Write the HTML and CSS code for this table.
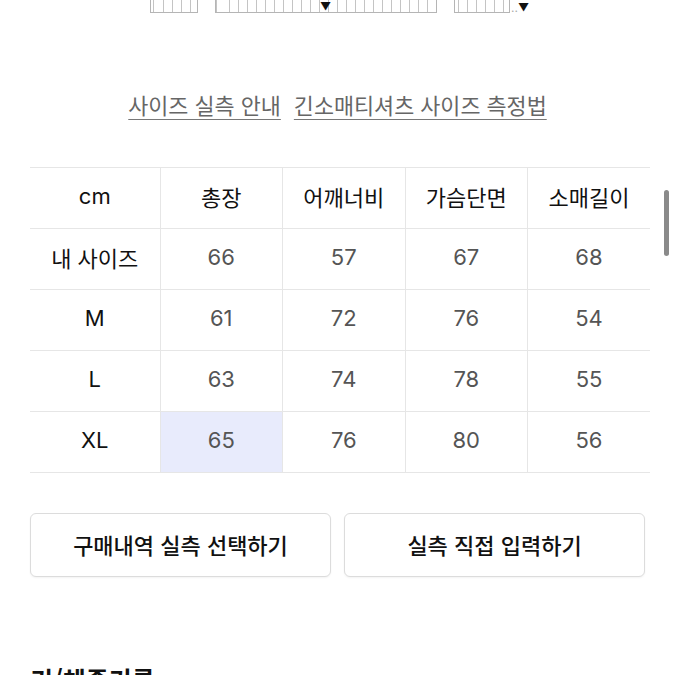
FILE: index.html
```html
<!DOCTYPE html>
<html lang="ko">
<head>
<meta charset="utf-8">
<link rel="stylesheet" href="styles.css">
</head>
<body>
<div class="page">
  <div class="topstrip">
    <div class="tofu t1"></div>
    <div class="tofu t2"><span class="arrow a2">▼</span></div>
    <div class="tofu t3"></div>
    <span class="dots">..</span><span class="arrow a3">▼</span>
  </div>

  <div class="links">
    <a class="link">사이즈 실측 안내</a>
    <a class="link">긴소매티셔츠 사이즈 측정법</a>
  </div>

  <table class="size">
    <tr class="head">
      <th>cm</th><th>총장</th><th>어깨너비</th><th>가슴단면</th><th>소매길이</th>
    </tr>
    <tr><th>내 사이즈</th><td>66</td><td>57</td><td>67</td><td>68</td></tr>
    <tr><th>M</th><td>61</td><td>72</td><td>76</td><td>54</td></tr>
    <tr><th>L</th><td>63</td><td>74</td><td>78</td><td>55</td></tr>
    <tr><th>XL</th><td class="hl">65</td><td>76</td><td>80</td><td>56</td></tr>
  </table>

  <div class="buttons">
    <button class="btn">구매내역 실측 선택하기</button>
    <button class="btn">실측 직접 입력하기</button>
  </div>

  <h2 class="section">키/체중기록</h2>
</div>
<div class="scrollbar"></div>
</body>
</html>
```

FILE: styles.css
```css
html, body {
  margin: 0;
  padding: 0;
  background: #fff;
  overflow: hidden;
  height: 675px;
}
body {
  font-family: Inter, "Noto Sans CJK KR", "Noto Sans", sans-serif;
  color: #111;
}
.page {
  width: 675px;
}
.topstrip {
  height: 15px;
  display: flex;
  align-items: flex-start;
  position: relative;
}
.tofu {
  height: 13px;
  border: 1px solid #b5b5b5;
  border-top: none;
  box-sizing: border-box;
  background-image: repeating-linear-gradient(to right, transparent 0, transparent 8px, #c4c4c4 8px, #c4c4c4 9px);
  position: relative;
}
.t1 { margin-left: 150px; width: 48px; background-position: 4px 0; }
.t2 { margin-left: 17px; width: 222px; background-position: 5px 0; }
.t3 { margin-left: 17px; width: 56px; background-position: 4px 0; }
.arrow {
  font-size: 11px;
  line-height: 11px;
  color: #111;
  position: absolute;
}
.a2 { left: 104px; top: 1px; }
.a3 { left: 518px; top: 2px; }
.dots {
  color: #aaa;
  font-size: 12px;
  line-height: 12px;
  margin-left: 1px;
  margin-top: 2px;
}
.links {
  display: flex;
  justify-content: center;
  gap: 13px;
  margin-top: 74px;
  height: 35px;
}
.link {
  font-family: "Noto Sans CJK KR", sans-serif;
  font-size: 21.8px;
  line-height: 32px;
  color: #666;
  text-decoration: underline;
  text-decoration-color: #777;
  text-underline-offset: 5px;
  text-decoration-thickness: 1px;
}
.size {
  margin-top: 43px;
  margin-left: 30px;
  width: 620px;
  border-collapse: collapse;
  table-layout: fixed;
}
.size th, .size td {
  height: 61px;
  padding: 0 0 5px 0;
  box-sizing: border-box;
  text-align: center;
  border-top: 1px solid #e6e6e6;
  border-bottom: 1px solid #e6e6e6;
  border-left: 1px solid #e6e6e6;
  font-size: 22px;
}
.size tr > :first-child { border-left: none; width: 130px; }
.size th {
  font-weight: 400;
  color: #111;
}
.size td {
  color: #555;
  font-size: 22px;
}
.size .hl {
  background: #e8ebfc;
}
.buttons {
  display: flex;
  gap: 13px;
  margin: 40px 0 0 30px;
}
.btn {
  width: 301px;
  height: 64px;
  border: 1px solid #dcdcdc;
  border-radius: 6px;
  background: #fff;
  font-family: "Noto Sans CJK KR", sans-serif;
  font-size: 22px;
  font-weight: 500;
  color: #111;
  padding: 0 0 3px 0;
  box-shadow: 0 1px 2px rgba(0,0,0,0.05);
}
.section {
  font-family: "Noto Sans CJK KR", sans-serif;
  margin: 87px 0 0 30px;
  font-size: 25px;
  font-weight: 700;
  line-height: 30px;
  color: #111;
}
.scrollbar {
  position: absolute;
  left: 664px;
  top: 190px;
  width: 5px;
  height: 66px;
  border-radius: 3px;
  background: #8a8a8a;
}
```
